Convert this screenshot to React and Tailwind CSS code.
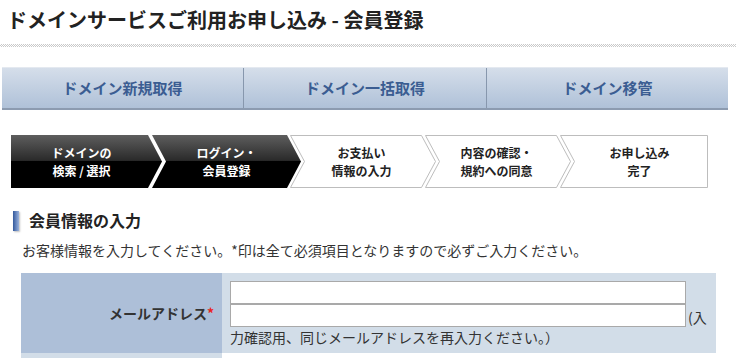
import React from "react";

const FONT = { fontFamily: '"Noto Sans CJK JP", "Noto Sans", sans-serif' };

function StepBar() {
  return (
    <div className="relative ml-[11px] h-[53px] w-[697px]">
      <svg className="absolute inset-0" width="697" height="53" viewBox="0 0 697 53">
        <defs>
          <linearGradient id="blk" x1="0" y1="0" x2="0" y2="1">
            <stop offset="0" stopColor="#5e5e5e" />
            <stop offset="0.48" stopColor="#2a2a2a" />
            <stop offset="0.5" stopColor="#000" />
            <stop offset="1" stopColor="#000" />
          </linearGradient>
        </defs>
        <polygon points="0,0 137,0 151,26.5 137,53 0,53" fill="url(#blk)" />
        <polygon points="141,0 276,0 290,26.5 276,53 141,53 155,26.5" fill="url(#blk)" />
        <polygon points="279.5,0.5 410.5,0.5 424.5,26.5 410.5,52.5 279.5,52.5 293.5,26.5" fill="#fff" stroke="#bdbdbd" />
        <polygon points="414.5,0.5 545.5,0.5 559.5,26.5 545.5,52.5 414.5,52.5 428.5,26.5" fill="#fff" stroke="#bdbdbd" />
        <polygon points="549.5,0.5 696.5,0.5 696.5,52.5 549.5,52.5 563.5,26.5" fill="#fff" stroke="#bdbdbd" />
      </svg>
      <div className="absolute inset-0 flex">
        <div className="flex w-[141px] flex-col items-center justify-center text-[12px] font-bold leading-[18px] text-white">
          <span>ドメインの</span>
          <span>検索 / 選択</span>
        </div>
        <div className="flex w-[135px] flex-col items-center justify-center pl-[14px] text-[12px] font-bold leading-[18px] text-white">
          <span>ログイン・</span>
          <span>会員登録</span>
        </div>
        <div className="flex w-[135px] flex-col items-center justify-center pl-[14px] text-[12px] font-bold leading-[18px] text-[#222]">
          <span>お支払い</span>
          <span>情報の入力</span>
        </div>
        <div className="flex w-[135px] flex-col items-center justify-center pl-[14px] text-[12px] font-bold leading-[18px] text-[#222]">
          <span>内容の確認・</span>
          <span>規約への同意</span>
        </div>
        <div className="flex w-[151px] flex-col items-center justify-center pl-[14px] text-[12px] font-bold leading-[18px] text-[#222]">
          <span>お申し込み</span>
          <span>完了</span>
        </div>
      </div>
    </div>
  );
}

export default function App() {
  const tab =
    "flex items-center justify-center bg-gradient-to-b from-[#d5deea] to-[#afc1d8] text-[15px] font-bold text-[#3b5d92]";
  return (
    <div className="h-[358px] w-[736px] overflow-hidden bg-white" style={FONT}>
      <div className="pl-[7px] pt-[6px] text-[20px] font-bold leading-[28px] text-[#222]">
        ドメインサービスご利用お申し込み - 会員登録
      </div>
      <div className="mt-[10px] h-[3px] w-[736px] bg-[repeating-conic-gradient(#c9c9c9_0_25%,#ffffff_0_50%)] bg-size-[2px_2px]" />

      <div className="ml-[2px] mt-[20px] flex h-[43px] w-[726px] border-b-2 border-t border-b-[#8c9bb0] border-t-[#e4e9f0]">
        <div className={tab + " w-[242px] border-r border-r-[#8797ad]"}>ドメイン新規取得</div>
        <div className={tab + " w-[243px] border-r border-r-[#8797ad]"}>ドメイン一括取得</div>
        <div className={tab + " flex-1"}>ドメイン移管</div>
      </div>

      <div className="mt-[25px]">
        <StepBar />
      </div>

      <div className="ml-[13px] mt-[22px] flex h-[21px] items-center">
        <div className="h-[20px] w-[6px] bg-gradient-to-r from-[#34599c] to-[#9ab2dc] shadow-[1px_1px_2px_rgba(0,0,0,0.25)]" />
        <div className="ml-[10px] text-[16px] font-bold leading-[21px] text-[#222]">会員情報の入力</div>
      </div>

      <div className="ml-[22px] mt-[9px] text-[14px] leading-[20px] text-[#333]">
        お客様情報を入力してください。*印は全て必須項目となりますので必ずご入力ください。
      </div>

      <div className="ml-[21px] mt-[13px] w-[695px]">
        <div className="flex">
          <div className="flex w-[201px] items-center justify-end bg-[#adbfd8] pr-[8px] text-[14px] font-bold text-[#333]">
            メールアドレス<span className="text-[#e8231e]">*</span>
          </div>
          <div className="flex-1 bg-[#d2dde8] pb-[6px] pl-[8px] pt-[8px] text-[14px] leading-[20px] text-[#333]">
            <input className="block h-[23px] w-[456px] border border-[#a9a9a9] bg-white" />
            <div className="flex items-end">
              <input className="block h-[23px] w-[456px] border border-[#a9a9a9] bg-white" />
              <span className="ml-[2px] leading-[20px]">(入</span>
            </div>
            <div>力確認用、同じメールアドレスを再入力ください。）</div>
          </div>
        </div>
        <div className="flex h-[30px]">
          <div className="w-[201px] bg-[#d2dde8]" />
          <div className="flex-1 bg-white" />
        </div>
      </div>
    </div>
  );
}
